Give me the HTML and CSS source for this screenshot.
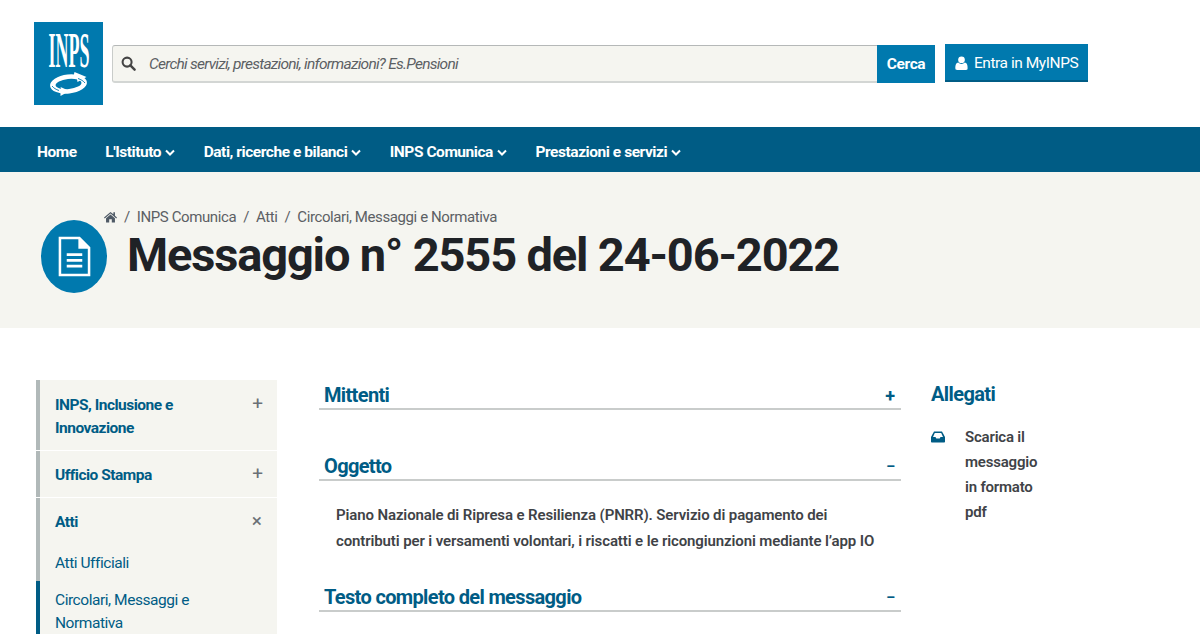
FILE: index.html
```html
<!DOCTYPE html>
<html lang="it">
<head>
<meta charset="utf-8">
<title>Messaggio n° 2555 del 24-06-2022</title>
<link rel="stylesheet" href="styles.css">
</head>
<body>
<header class="top">
  <div class="logo">
    <span class="logo-text">INPS</span>
    <svg class="logo-arrows" viewBox="0 0 40 24" aria-hidden="true"><g transform="rotate(-6 20 12)"><ellipse cx="20" cy="12" rx="18.500" ry="9.500" fill="#fff"/><ellipse cx="20" cy="12" rx="13" ry="5" fill="#0079ae"/></g><path d="M9 18c-4-1-6-3-6-5 2 4 6 5 10 5l-1-3 9 4-9 5v-3c-1 0-2-1-3-3z" fill="#fff"/><path d="M26 0l12 5-9 5-.500-3-4-1z" fill="#fff"/><path d="M36.500 11c-1.500-2-4-3.500-7-4.500M3.500 14c1.500 2 4 3.500 7 4.500" fill="none" stroke="#0079ae" stroke-width=".9"/></svg>
  </div>
  <form class="search">
    <svg class="search-icon" viewBox="0 0 16 16" aria-hidden="true"><circle cx="6.500" cy="6.500" r="4.800" fill="none" stroke="#444" stroke-width="2.200"/><path d="M10 10l4.500 4.500" stroke="#444" stroke-width="2.600" stroke-linecap="round"/></svg>
    <span class="search-text">Cerchi servizi, prestazioni, informazioni? Es.Pensioni</span>
    <span class="search-btn">Cerca</span>
  </form>
  <a class="login"><svg class="user" viewBox="0 0 14 15" aria-hidden="true"><circle cx="7" cy="4" r="3.600" fill="#fff"/><path d="M0.500 14c-.5-4 1-7 3-7 1 1 2 1.500 3.500 1.500S9.500 8 10.500 7c2 0 3.500 3 3 7-.2.700-1 1-1.500 1H2c-.5 0-1.300-.3-1.500-1z" fill="#fff"/></svg>Entra in MyINPS</a>
</header>
<nav class="nav">
  <a>Home</a>
  <a>L'Istituto<svg class="chev" viewBox="0 0 10 7"><path d="M1 1.500l4 4 4-4" fill="none" stroke="#fff" stroke-width="2"/></svg></a>
  <a>Dati, ricerche e bilanci<svg class="chev" viewBox="0 0 10 7"><path d="M1 1.500l4 4 4-4" fill="none" stroke="#fff" stroke-width="2"/></svg></a>
  <a>INPS Comunica<svg class="chev" viewBox="0 0 10 7"><path d="M1 1.500l4 4 4-4" fill="none" stroke="#fff" stroke-width="2"/></svg></a>
  <a>Prestazioni e servizi<svg class="chev" viewBox="0 0 10 7"><path d="M1 1.500l4 4 4-4" fill="none" stroke="#fff" stroke-width="2"/></svg></a>
</nav>
<section class="hero">
  <div class="badge"><svg viewBox="0 0 34 42" aria-hidden="true"><path d="M2 2h20l10 10v28H2z" fill="none" stroke="#fff" stroke-width="2.600"/><path d="M21 2v11h11z" fill="#fff"/><path d="M9 19h16M9 25h16M9 31h16" stroke="#fff" stroke-width="2.800"/></svg></div>
  <div class="hero-body">
    <div class="crumbs"><svg class="home" viewBox="0 0 14 12" aria-hidden="true"><path d="M7 .5L0 6.500l.8 1L7 2.300l6.200 5.200.8-1-2.200-1.900V1h-1.700v2.100zM2.200 7.400V12h3.400V8.500h2.800V12h3.400V7.400L7 3.400z" fill="#4f5a66"/></svg><i>/</i><span>INPS Comunica</span><i>/</i><span>Atti</span><i>/</i><span>Circolari, Messaggi e Normativa</span></div>
    <h1>Messaggio n° 2555 del 24-06-2022</h1>
  </div>
</section>
<main class="main">
  <aside class="side">
    <div class="side-item"><span class="side-title">INPS, Inclusione e Innovazione</span><span class="mark">+</span></div>
    <div class="side-item"><span class="side-title">Ufficio Stampa</span><span class="mark">+</span></div>
    <div class="side-open">
      <div class="side-item-open"><span class="side-title">Atti</span><span class="mark">×</span></div>
      <div class="side-sub">Atti Ufficiali</div>
      <div class="side-sub current">Circolari, Messaggi e Normativa</div>
    </div>
  </aside>
  <article class="content">
    <div class="acc-head"><h2>Mittenti</h2><span class="acc-mark">+</span></div>
    <div class="acc-head gap"><h2>Oggetto</h2><span class="acc-mark minus">–</span></div>
    <p class="acc-text">Piano Nazionale di Ripresa e Resilienza (PNRR). Servizio di pagamento dei contributi per i versamenti volontari, i riscatti e le ricongiunzioni mediante l’app IO</p>
    <div class="acc-head"><h2>Testo completo del messaggio</h2><span class="acc-mark minus">–</span></div>
  </article>
  <aside class="attach">
    <h2>Allegati</h2>
    <div class="file">
      <svg class="inbox" viewBox="0 0 14 12" aria-hidden="true"><path d="M3 .5h8L14 6v4.500c0 .6-.5 1-1 1H1c-.5 0-1-.4-1-1V6z" fill="#005c85"/><path d="M3.800 2h6.400l1.800 4H9.500l-.8 1.500H5.300L4.500 6H2z" fill="#fff"/></svg>
      <span>Scarica il messaggio in formato pdf</span>
    </div>
  </aside>
</main>
</body>
</html>
```
FILE: styles.css
```css
* { box-sizing: border-box; }
html, body { margin: 0; height: 634px; overflow: hidden; }
body { font-family: "Roboto", "Lato", sans-serif; color: #19191a; background: #fff; }

.top { height: 127px; display: flex; align-items: flex-start; padding: 22px 0 0 34px; }
.logo { width: 69px; height: 83px; background: #0079ae; display: flex; flex-direction: column; align-items: center; padding-top: 6px; flex: none; }
.logo-text { font-family: "Liberation Serif", serif; font-weight: 700; color: #fff; font-size: 50px; line-height: 44px; transform: scaleX(.36); white-space: nowrap; }
.logo-arrows { width: 41px; height: 24px; margin-top: 0; }

.search { margin: 23px 0 0 9px; width: 823px; height: 38px; display: flex; align-items: center; background: #f5f5f0; border: 1px solid #c9ccca; border-top-color: #b5b8b8; border-bottom: 2px solid #d3d6d4; border-right: 0; border-radius: 3px 0 0 3px; padding-left: 8px; }
.search-icon { width: 15px; height: 15px; flex: none; }
.search-text { flex: 1; margin: 1px 0 0 13px; font-style: italic; font-size: 15.500px; letter-spacing: -.75px; color: #5c6064; }
.search-btn { width: 58px; height: 38px; margin: -1px 0 -2px; background: #0079ae; color: #fff; font-weight: 700; font-size: 15.500px; letter-spacing: -.4px; display: flex; align-items: center; justify-content: center; }
.login { margin: 22px 0 0 10px; width: 143px; height: 38px; background: #0079ae; border-bottom: 2px solid #005c85; color: #fff; font-size: 15.500px; letter-spacing: -.45px; display: flex; align-items: center; padding: 1px 0 0 10px; }
.user { width: 13px; height: 14px; margin-right: 6px; flex: none; }

.nav { height: 45px; background: #005c85; display: flex; align-items: center; padding: 5px 0 0 37px; gap: 28.500px; color: #fff; font-weight: 700; font-size: 15.500px; letter-spacing: -.45px; }
.nav a { display: flex; align-items: center; }
.chev { width: 10px; height: 7px; margin-left: 4px; }

.hero { height: 156px; background: #f5f5f0; display: flex; padding: 48px 0 0 41px; }
.badge { width: 66px; height: 73px; border-radius: 50%; background: #0079ae; display: flex; align-items: center; justify-content: center; flex: none; }
.badge svg { width: 33px; height: 41px; }
.hero-body { margin: -16px 0 0 -3px; }
.crumbs { display: flex; align-items: center; height: 20px; color: #5c6064; font-size: 15px; letter-spacing: -.4px; margin-top: 3px; }
.home { width: 13px; height: 12px; }
.crumbs i { font-style: normal; margin: 0 7px; }
h1 { margin: 2px 0 0 23px; font-size: 47px; line-height: 52px; font-weight: 700; letter-spacing: -1.15px; white-space: nowrap; color: #1f2226; }

.main { display: flex; align-items: flex-start; padding: 52px 0 0 36px; }
.side { width: 241px; flex: none; }
.side-item { display: flex; justify-content: space-between; background: #f5f5f0; border-left: 4px solid #b1b9b9; padding: 14px 14px 10px 15px; margin-bottom: 1px; }
.side-item + .side-item { padding: 13px 14px 10px 15px; }
.side-title { color: #005c85; font-weight: 700; font-size: 15.500px; line-height: 23px; letter-spacing: -.5px; width: 140px; }
.mark { color: #6a7077; font-size: 19px; line-height: 20px; font-weight: 400; }
.side-open { background: #f5f5f0; border-left: 4px solid #b1b9b9; }
.side-item-open { display: flex; justify-content: space-between; padding: 13px 15px 10px 15px; }
.side-sub { color: #005c85; font-size: 15.500px; line-height: 23px; letter-spacing: -.45px; padding: 8px 30px 6px 15px; }
.side-sub.current { margin-left: -4px; padding-left: 15px; padding-top: 8px; border-left: 4px solid #005c85; height: 60px; box-sizing: content-box; }

.content { width: 582px; margin-left: 42px; flex: none; }
.acc-head { display: flex; justify-content: space-between; align-items: flex-end; border-bottom: 2px solid #c9cccb; height: 30px; padding: 0 6px 0 5px; }
.acc-head.gap { margin-top: 41px; }
.acc-head h2 { margin: 0 0 -1px; color: #005c85; font-size: 20px; line-height: 27px; font-weight: 700; letter-spacing: -.65px; }
.acc-mark { color: #005c85; font-weight: 700; font-size: 18px; line-height: 25px; }
.acc-mark.minus { font-size: 14px; }
.acc-text { margin: 21px 20px 28px 17px; color: #3f4347; font-weight: 600; font-size: 15px; line-height: 26px; letter-spacing: -.12px; }

.attach { width: 110px; margin-left: 30px; flex: none; }
.attach h2 { margin: 1px 0 -1px; height: 30px; color: #005c85; font-size: 20px; line-height: 27px; font-weight: 700; letter-spacing: -.6px; }
.file { display: flex; margin-top: 15px; color: #3f4347; font-weight: 600; font-size: 15px; line-height: 25px; letter-spacing: -.2px; }
.inbox { width: 14px; height: 12px; margin-top: 6px; flex: none; }
.file span { margin-left: 20px; width: 78px; }
```
